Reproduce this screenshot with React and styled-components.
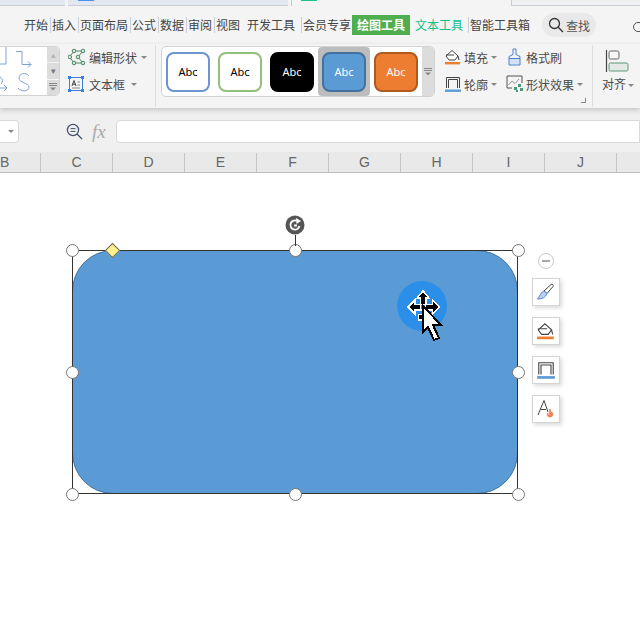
import React from 'react';
import styled, { createGlobalStyle } from 'styled-components';

const GlobalStyle = createGlobalStyle`
    html, body { margin: 0; padding: 0; background: #fff; }
    body { font-family: "Noto Sans CJK SC", "Liberation Sans", sans-serif; }
`

const menus = [
    { label: '开始', w: 24, ml: 24 },
    { label: '插入', w: 24, sep: true },
    { label: '页面布局', w: 48, sep: true },
    { label: '公式', w: 24, sep: true },
    { label: '数据', w: 24, sep: true },
    { label: '审阅', w: 24, sep: true },
    { label: '视图', w: 24, sep: true },
    { label: '开发工具', w: 48, ml: 7 },
    { label: '会员专享', w: 48, sep: true, ml: 4 },
]

const styles = [
    { border: '#6f94d2', bg: '#fff', color: '#000' },
    { border: '#93bf78', bg: '#fff', color: '#000' },
    { border: '#000', bg: '#000', color: '#fff' },
    { border: '#41719c', bg: '#5b9bd5', color: '#fff', active: true },
    { border: '#ae5a21', bg: '#ed7d31', color: '#fff' },
]

const columns = ['B', 'C', 'D', 'E', 'F', 'G', 'H', 'I', 'J', '']

const handles = [
    [0, 0], [50, 0], [100, 0],
    [0, 50], [100, 50],
    [0, 100], [50, 100], [100, 100],
]

const Caret = () => <CaretMark />

const MoreGlyph = () => (
    <svg width="8" height="8" viewBox="0 0 8 8" fill="#888">
        <rect width="8" height="1" />
        <rect y="2" width="8" height="1" />
        <path d="M1 4.5 H7 L4 7.5 Z" />
    </svg>
)

const EditShapeIcon = () => (
    <svg width="18" height="18" viewBox="0 0 18 18" fill="none" stroke="#4f8763" strokeWidth="1">
        <path d="M1.5 9 L6 3 H15 L10 9 L15 15 H6 Z" />
        <g fill="#d3e6d9"><circle cx="1.8" cy="9" r="1.8" /><circle cx="6" cy="3" r="1.8" /><circle cx="15" cy="3" r="1.8" /><circle cx="10" cy="9" r="1.8" /><circle cx="15" cy="15" r="1.8" /><circle cx="6" cy="15" r="1.8" /></g>
    </svg>
)

const TextBoxIcon = () => (
    <svg width="16" height="16" viewBox="0 0 16 16" fill="none">
        <rect x="1.5" y="1.5" width="13" height="13" stroke="#3f7fe0" />
        <g fill="#3f7fe0"><rect y="0" width="3" height="3" /><rect x="13" y="0" width="3" height="3" /><rect y="13" width="3" height="3" /><rect x="13" y="13" width="3" height="3" /></g>
        <path d="M4 10 L6 4.5 L8 10 M4.8 8.2 H7.2" stroke="#444" />
        <path d="M9.5 6 H12 M9.5 9 H12 M4 12 H12" stroke="#888" />
    </svg>
)

const FillIcon = ({ size = 18, color = '#ed7d31' }) => (
    <svg width={size} height={size} viewBox="0 0 18 18" fill="none" stroke="#444" strokeWidth="1">
        <path d="M2 8 L8 2.5 L14 8 L11 12 H5 Z" fill="#fff" />
        <path d="M2 7 H10 M14 8 L15 12" />
        <rect x="1" y="14" width="15" height="2.4" fill={color} stroke="none" />
    </svg>
)

const OutlineIcon = ({ size = 18 }) => (
    <svg width={size} height={size} viewBox="0 0 18 18" fill="none" stroke="#444" strokeWidth="1">
        <path d="M2.5 13 V2.5 H15.5 V13 M4.5 13 V4.5 H13.5 V13" />
        <rect x="1" y="14.5" width="16" height="2.4" fill="#5b9bd5" stroke="none" />
    </svg>
)

const BrushIcon = () => (
    <svg width="13" height="18" viewBox="0 0 13 18" fill="none" stroke="#4a7fd0" strokeWidth="1">
        <rect x="1" y="10.5" width="11" height="6" fill="#d5e2f6" stroke="none" />
        <path d="M5 1 H8 V6.5 L12 8.5 V17 H1 V8.5 L5 6.5 Z" />
        <path d="M1 10.5 H12" />
    </svg>
)

const EffectIcon = () => (
    <svg width="18" height="18" viewBox="0 0 18 18" fill="none" stroke="#555" strokeWidth="1">
        <path d="M6 13 H1 V1 H16 V8" />
        <path d="M2.5 10 L6 6 L9 8.5 L13 4" stroke="#999" />
        <g fill="#4d9a7b" stroke="none"><rect x="8" y="12" width="3" height="3" /><rect x="12" y="9" width="3" height="3" /><rect x="14" y="13" width="3" height="3" /><rect x="10" y="15" width="2" height="2" /></g>
    </svg>
)

const AlignIcon = () => (
    <svg width="24" height="24" viewBox="0 0 24 24" fill="none">
        <path d="M1.5 0 V22" stroke="#444" strokeWidth="1.2" />
        <rect x="4" y="1" width="10" height="8" rx="1.5" stroke="#666" fill="#f6f6f6" />
        <rect x="4" y="13" width="19" height="8" rx="1.5" stroke="#5a9672" fill="#e3e9e5" />
    </svg>
)

const SearchIcon = () => (
    <svg width="16" height="16" viewBox="0 0 16 16" fill="none" stroke="#333" strokeWidth="1.3">
        <circle cx="6.5" cy="6.5" r="5" />
        <path d="M10.2 10.2 L15 15" />
    </svg>
)

const ZoomFormulaIcon = () => (
    <svg width="17" height="17" viewBox="0 0 17 17" fill="none" stroke="#44536b" strokeWidth="1.3">
        <circle cx="7" cy="7" r="5.6" />
        <path d="M4.5 5.6 H9.5 M4.5 8.4 H9.5" strokeWidth="1" />
        <path d="M11 11 L16 16" />
    </svg>
)

const ConnectorIcons = () => (
    <svg width="47" height="48" viewBox="0 0 47 48" fill="none" stroke="#7ea2d6" strokeWidth="1">
        <path d="M6 0 V17 H0" />
        <path d="M16 4.5 H22 V17.5 H31 M28 14.5 L31 17.5 L28 20.5" />
        <path d="M0 30 C3 31 3 35 1 37 M0 41 H7 M4 38 L7 41 L4 44" />
        <path d="M29 29 C26 25 19 26 19 31 C19 36 29 36 29 40 C29 45 21 45 18 41" />
    </svg>
)

const Rotate = () => (
    <svg width="20" height="20" viewBox="0 0 20 20">
        <circle cx="10" cy="10" r="9.5" fill="#555" />
        <path d="M14.5 11 A4.6 4.6 0 1 1 11.5 5.6" fill="none" stroke="#fff" strokeWidth="1.8" />
        <path d="M11 3 L16 6 L11.5 9 Z" fill="#fff" />
        <rect x="9" y="9.5" width="3" height="2" fill="#fff" />
    </svg>
)

const PencilIcon = () => (
    <svg width="20" height="20" viewBox="0 0 20 20" fill="none" stroke="#5a83d2" strokeWidth="1">
        <path d="M8 9 L15 2.5 C16 1.5 18 3 17 4.5 L11 11.5 Z" stroke="#444" fill="#fff" />
        <path d="M8 9 L11 11.5 C9.5 15.5 6 17 1.5 17 C4 15 4 10.5 8 9 Z" fill="#bcd0f2" />
    </svg>
)

const TextColorIcon = () => (
    <svg width="20" height="20" viewBox="0 0 20 20" fill="none">
        <path d="M2 16 L8 1.5 L12 13 M4.5 10.5 H10" stroke="#444" strokeWidth="1" />
        <path d="M11.5 14 C11.5 18.5 16.5 18.5 16.5 14 M14 10 V16 L16 13" stroke="#ef7f52" strokeWidth="1.6" />
    </svg>
)

const MoveCursor = () => (
    <svg width="50" height="62" viewBox="0 0 50 62" shapeRendering="crispEdges">
        <circle cx="25" cy="25" r="25" fill="#2b8ee8" shapeRendering="auto" />
        <g fill="#000" stroke="#fff" strokeWidth="3" paintOrder="stroke">
            <path d="M26 11 L30 16 H28 V23 H24 V16 H22 Z" />
            <path d="M12 26 L17 21 V24 H23 V28 H17 V31 Z" />
            <path d="M41 26 L36 21 V24 H29 V28 H36 V31 Z" />
            <path d="M22 34 H28 V38 H22 Z" />
        </g>
        <rect x="24" y="24" width="4" height="4" fill="#2b8ee8" />
        <path d="M26 25 L44 44 H36 L42 57 L37 59 L31 46 L26 51 Z" fill="#fff" stroke="#000" strokeWidth="2" />
    </svg>
)

export default function App() {
    return (
        <Page>
            <GlobalStyle />
            <TabStrip>
                <OldTab $w={65} />
                <OldTab $w={220} $ml={3} $mark="#4a90ee" />
                <ActiveTab $mark="#1fc08e" />
                <NextTab />
            </TabStrip>
            <MenuBar>
                {menus.map(m => (
                    <MenuItem key={m.label} $w={m.w} $sep={m.sep} $ml={m.ml}>{m.label}</MenuItem>
                ))}
                <DrawTab>绘图工具</DrawTab>
                <TextTab>文本工具</TextTab>
                <SmartTab>智能工具箱</SmartTab>
                <SearchPill><SearchIcon />查找</SearchPill>
                <Cloud />
            </MenuBar>
            <Ribbon>
                <ShapeGallery>
                    <ConnectorIcons />
                    <ScrollCol>
                        <ScrollBtn $dim>▴</ScrollBtn>
                        <ScrollBtn>▾</ScrollBtn>
                        <ScrollBtn><MoreGlyph /></ScrollBtn>
                    </ScrollCol>
                </ShapeGallery>
                <ToolCol $ml={8} $w={87}>
                    <Tool><EditShapeIcon />编辑形状<Caret /></Tool>
                    <Tool $gap={4}><TextBoxIcon />文本框<Caret /></Tool>
                </ToolCol>
                <Divider />
                <StyleGallery>
                    <StyleCards>
                        {styles.map(s => (
                            <StyleCell key={s.border} $active={s.active}>
                                <StyleCard $border={s.border} $bg={s.bg} $color={s.color}>Abc</StyleCard>
                            </StyleCell>
                        ))}
                    </StyleCards>
                    <GalleryMore><MoreGlyph /></GalleryMore>
                </StyleGallery>
                <ToolCol $ml={9} $w={64}>
                    <Tool $gap={1}><FillIcon />填充<Caret /></Tool>
                    <Tool $gap={1}><OutlineIcon />轮廓<Caret /></Tool>
                </ToolCol>
                <ToolCol $w={84}>
                    <Tool $gap={4}><BrushIcon />格式刷</Tool>
                    <Tool $gap={1} $shift={-2}><EffectIcon />形状效果<Caret /></Tool>
                </ToolCol>
                <CornerMark />
                <Divider />
                <AlignTool><AlignIcon /><AlignLabel>对齐<Caret /></AlignLabel></AlignTool>
            </Ribbon>
            <FormulaRow>
                <NameBox><Caret /></NameBox>
                <ZoomSlot><ZoomFormulaIcon /></ZoomSlot>
                <Fx>fx</Fx>
                <FormulaInput />
            </FormulaRow>
            <ColumnHeader>
                {columns.map((c, i) => <ColumnCell key={i} $first={i === 0}>{c}</ColumnCell>)}
            </ColumnHeader>
            <Sheet>
                <Frame>
                    <RoundedShape />
                    <SelectionLine />
                    {handles.map(([x, y]) => (
                        <Handle key={`${x}-${y}`} style={{ left: `${x}%`, top: `${y}%` }} />
                    ))}
                    <Diamond />
                    <RotateStem />
                    <RotateHandle><Rotate /></RotateHandle>
                    <CursorSpot><MoveCursor /></CursorSpot>
                </Frame>
                <FloatBar>
                    <Collapse />
                    <FloatBtn><PencilIcon /></FloatBtn>
                    <FloatBtn><FillIcon size={20} /></FloatBtn>
                    <FloatBtn><OutlineIcon size={20} /></FloatBtn>
                    <FloatBtn><TextColorIcon /></FloatBtn>
                </FloatBar>
            </Sheet>
        </Page>
    )
}

const Page = styled.div`
    display: flex;
    flex-direction: column;
    width: 640px;
    height: 640px;
    overflow: hidden;
    background: #fff;
`
const TabStrip = styled.div`
    display: flex;
    height: 6px;
    flex: none;
    background: #f4f4f4;
`
const OldTab = styled.div`
    position: relative;
    width: ${p => p.$w}px;
    margin-left: ${p => p.$ml || 0}px;
    background: #e3e7f0;
    border-bottom: 1px solid #c9cdd8;
    &::before {
        content: "";
        display: ${p => p.$mark ? 'block' : 'none'};
        position: absolute;
        left: 10px;
        top: 0;
        width: 16px;
        height: 1px;
        background: ${p => p.$mark};
    }
`
const ActiveTab = styled.div`
    position: relative;
    width: 219px;
    margin-left: 3px;
    border-left: 1px solid #c9cdd8;
    &::before {
        content: "";
        position: absolute;
        left: 9px;
        top: 0;
        width: 16px;
        height: 1px;
        background: ${p => p.$mark};
    }
`
const NextTab = styled.div`
    flex: 1;
    background: #eef0f4;
    border-left: 1px solid #c9cdd8;
    border-bottom: 1px solid #c9cdd8;
`
const MenuBar = styled.div`
    display: flex;
    align-items: center;
    height: 38px;
    flex: none;
    position: relative;
    background: #f4f4f4;
    font-size: 12px;
    color: #444;
`
const MenuItem = styled.div`
    position: relative;
    flex: none;
    width: ${p => p.$w}px;
    margin-left: ${p => (p.$sep ? 4 : 0) + (p.$ml || 0)}px;
    line-height: 20px;
    white-space: nowrap;
    &::before {
        content: "";
        display: ${p => p.$sep ? 'block' : 'none'};
        position: absolute;
        left: -2px;
        top: 2px;
        bottom: 2px;
        width: 1px;
        background: #c9cfd9;
    }
`
const DrawTab = styled.div`
    width: 58px;
    height: 20px;
    line-height: 20px;
    margin-left: 1px;
    text-align: center;
    background: #4fae4e;
    color: #fff;
    font-weight: 700;
`
const TextTab = styled.div`
    width: 48px;
    margin-left: 5px;
    line-height: 20px;
    color: #14c08a;
`
const SmartTab = styled.div`
    position: relative;
    margin-left: 7px;
    line-height: 20px;
    width: 60px;
    &::before {
        content: "";
        position: absolute;
        left: -2px;
        top: 2px;
        bottom: 2px;
        width: 1px;
        background: #c9cfd9;
    }
`
const SearchPill = styled.div`
    display: flex;
    align-items: center;
    justify-content: center;
    gap: 2px;
    width: 54px;
    height: 24px;
    margin-left: 12px;
    border-radius: 12px;
    background: #e9e9e9;
    color: #555;
`
const Cloud = styled.div`
    position: absolute;
    left: 633px;
    top: 16px;
    width: 14px;
    height: 10px;
    box-sizing: border-box;
    border: 1px solid #555;
    border-radius: 8px;
`
const Ribbon = styled.div`
    position: relative;
    display: flex;
    align-items: flex-start;
    height: 64px;
    flex: none;
    padding-top: 2px;
    box-sizing: border-box;
    background: #f4f4f4;
    box-shadow: 0 2px 5px rgba(0, 0, 0, .18);
    font-size: 12px;
    color: #4a4a4a;
    z-index: 1;
`
const ShapeGallery = styled.div`
    display: flex;
    flex: none;
    width: 60px;
    height: 50px;
    box-sizing: border-box;
    background: #fff;
    border: 1px solid #d2d2d2;
    border-left: none;
    border-radius: 0 5px 5px 0;
    overflow: hidden;
`
const ScrollCol = styled.div`
    display: flex;
    flex-direction: column;
    width: 12px;
    background: #dcdcdc;
`
const ScrollBtn = styled.div`
    flex: 1;
    display: flex;
    align-items: center;
    justify-content: center;
    font-size: 9px;
    color: ${p => p.$dim ? '#b5b5b5' : '#777'};
    border-bottom: 1px solid #f4f4f4;
    &:last-child { border-bottom: none; }
`
const ToolCol = styled.div`
    display: flex;
    flex-direction: column;
    flex: none;
    width: ${p => p.$w}px;
    margin-left: ${p => p.$ml || 0}px;
    padding-top: 2px;
    gap: 9px;
`
const Tool = styled.div`
    display: flex;
    align-items: center;
    gap: ${p => p.$gap === undefined ? 2 : p.$gap}px;
    height: 18px;
    margin-left: ${p => p.$shift || 0}px;
    white-space: nowrap;
    & > svg { flex: none; margin-right: 1px; }
`
const CaretMark = styled.span`
    display: inline-block;
    width: 0;
    height: 0;
    margin-left: 2px;
    vertical-align: middle;
    border-left: 3px solid transparent;
    border-right: 3px solid transparent;
    border-top: 3px solid #888;
`
const Divider = styled.div`
    flex: none;
    width: 1px;
    height: 62px;
    margin-top: -1px;
    background: #dedede;
`
const StyleGallery = styled.div`
    display: flex;
    flex: none;
    width: 274px;
    height: 51px;
    margin-left: 5px;
    box-sizing: border-box;
    background: #fff;
    border: 1px solid #d2d2d2;
    border-radius: 5px;
    overflow: hidden;
`
const StyleCards = styled.div`
    display: flex;
    flex: 1;
`
const StyleCell = styled.div`
    display: flex;
    align-items: center;
    justify-content: center;
    width: 52px;
    background: ${p => p.$active ? '#bdbdbd' : 'transparent'};
    border-radius: ${p => p.$active ? '4px' : '0'};
`
const StyleCard = styled.div`
    width: 44px;
    height: 40px;
    box-sizing: border-box;
    display: flex;
    align-items: center;
    justify-content: center;
    border: 2px solid ${p => p.$border};
    border-radius: 8px;
    background: ${p => p.$bg};
    color: ${p => p.$color};
    font-family: "Noto Sans", sans-serif;
    font-size: 11px;
`
const GalleryMore = styled.div`
    width: 12px;
    display: flex;
    align-items: center;
    justify-content: center;
    background: #dcdcdc;
`
const CornerMark = styled.div`
    position: absolute;
    left: 581px;
    top: 54px;
    width: 4px;
    height: 4px;
    border-right: 1px solid #888;
    border-bottom: 1px solid #888;
`
const AlignTool = styled.div`
    display: flex;
    flex-direction: column;
    align-items: center;
    width: 52px;
    padding-top: 4px;
    gap: 1px;
    white-space: nowrap;
`
const AlignLabel = styled.span`
    margin-left: 3px;
`
const FormulaRow = styled.div`
    display: flex;
    align-items: center;
    height: 35px;
    flex: none;
    padding-top: 12px;
    box-sizing: border-box;
    background: #f0f0f0;
`
const NameBox = styled.div`
    display: flex;
    align-items: center;
    justify-content: flex-end;
    width: 19px;
    height: 23px;
    padding-right: 4px;
    box-sizing: border-box;
    background: #fff;
    border: 1px solid #d9d9d9;
    border-left: none;
    border-radius: 0 4px 4px 0;
`
const ZoomSlot = styled.div`
    display: flex;
    margin-left: 47px;
`
const Fx = styled.div`
    width: 24px;
    margin-left: 9px;
    font-family: "Liberation Serif", serif;
    font-style: italic;
    font-size: 19px;
    color: #aaa;
`
const FormulaInput = styled.div`
    flex: 1;
    height: 23px;
    box-sizing: border-box;
    background: #fff;
    border: 1px solid #d9d9d9;
    border-radius: 4px 0 0 4px;
`
const ColumnHeader = styled.div`
    display: flex;
    flex: none;
    height: 30px;
    padding-top: 10px;
    box-sizing: border-box;
    background: linear-gradient(#f0f0f0 0 9px, #e9e9e9 9px);
    border-bottom: 1px solid #bdbdbd;
`
const ColumnCell = styled.div`
    flex: none;
    width: ${p => p.$first ? 41 : 72}px;
    box-sizing: border-box;
    border-right: 1px solid #c4c4c4;
    padding-right: ${p => p.$first ? 32 : 0}px;
    line-height: 19px;
    text-align: center;
    font-family: "Liberation Sans", sans-serif;
    font-size: 14px;
    color: #666;
`
const Sheet = styled.div`
    position: relative;
    flex: 1;
    background: #fff;
`
const Frame = styled.div`
    position: absolute;
    left: 72px;
    top: 77px;
    width: 446px;
    height: 244px;
`
const RoundedShape = styled.div`
    position: absolute;
    inset: 0;
    box-sizing: border-box;
    background: #5b9bd5;
    border: 1px solid #41719c;
    border-radius: 41px;
`
const SelectionLine = styled.div`
    position: absolute;
    inset: 0;
    box-sizing: border-box;
    border: 1px solid #333;
`
const Handle = styled.div`
    position: absolute;
    width: 13px;
    height: 13px;
    margin: -6px 0 0 -6px;
    box-sizing: border-box;
    background: #fff;
    border: 1px solid #777;
    border-radius: 50%;
`
const Diamond = styled.div`
    position: absolute;
    left: 35px;
    top: -5px;
    width: 9px;
    height: 9px;
    background: #fdf28e;
    border: 1px solid #666;
    transform: rotate(45deg);
`
const RotateStem = styled.div`
    position: absolute;
    left: 50%;
    top: -15px;
    width: 1px;
    height: 11px;
    background: #333;
`
const RotateHandle = styled.div`
    position: absolute;
    left: 50%;
    top: -35px;
    margin-left: -10px;
    line-height: 0;
`
const CursorSpot = styled.div`
    position: absolute;
    left: 325px;
    top: 31px;
    line-height: 0;
`
const FloatBar = styled.div`
    position: absolute;
    left: 532px;
    top: 80px;
    display: flex;
    flex-direction: column;
    gap: 11px;
`
const Collapse = styled.div`
    position: relative;
    width: 16px;
    height: 16px;
    margin: 0 0 -2px 6px;
    box-sizing: border-box;
    background: #fff;
    border: 1px solid #c9c9c9;
    border-radius: 50%;
    &::before {
        content: "";
        position: absolute;
        left: 3px;
        right: 3px;
        top: 6px;
        height: 2px;
        background: #aaa;
    }
`
const FloatBtn = styled.div`
    display: flex;
    align-items: center;
    justify-content: center;
    width: 28px;
    height: 28px;
    box-sizing: border-box;
    background: #fff;
    border: 1px solid #d4d4d4;
    box-shadow: 2px 2px 4px rgba(0, 0, 0, .15);
`
